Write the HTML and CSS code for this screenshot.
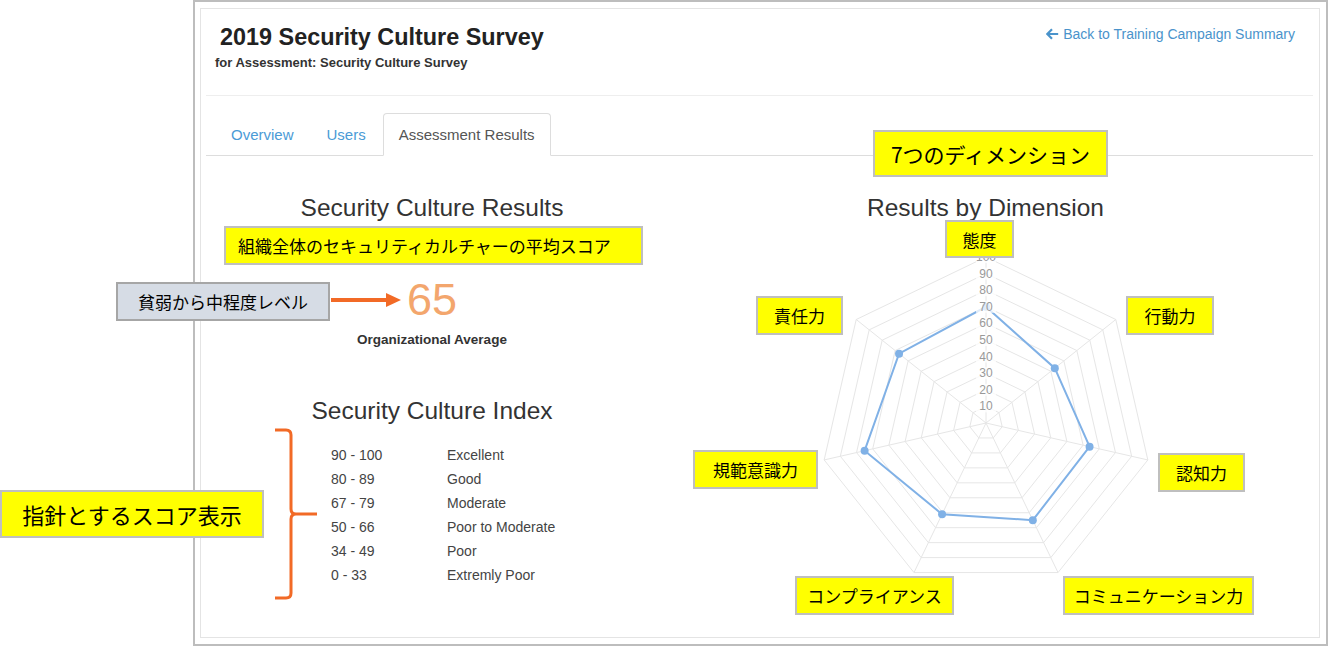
FILE: index.html
```html
<!DOCTYPE html>
<html lang="ja">
<head>
    <meta charset="UTF-8">
    <meta name="viewport" content="width=device-width, initial-scale=1.0">
    <title>2019 Security Culture Survey - Assessment Results</title>
    <link rel="stylesheet" href="styles.css">
</head>
<body>
    <div class="frame">
        <div class="panel">
            <header class="page-header">
                <div class="titles">
                    <h1>2019 Security Culture Survey</h1>
                    <p class="subtitle">for Assessment: Security Culture Survey</p>
                </div>
                <a class="back-link" href="#">
                    <svg width="13" height="12" viewBox="0 0 13 12"><path d="M6 1.2 L1.3 6 L6 10.8 M1.6 6 H12.2" fill="none" stroke="currentColor" stroke-width="2.2"/></svg>
                    Back to Training Campaign Summary
                </a>
            </header>

            <ul class="tabs">
                <li><a href="#">Overview</a></li>
                <li><a href="#">Users</a></li>
                <li class="active"><a href="#">Assessment Results</a></li>
            </ul>

            <div class="results">
                <section class="col-left">
                    <h2>Security Culture Results</h2>
                    <div class="score">65</div>
                    <div class="score-label">Organizational Average</div>

                    <h2 class="index-title">Security Culture Index</h2>
                    <table class="index-table">
                        <tr><td>90 - 100</td><td>Excellent</td></tr>
                        <tr><td>80 - 89</td><td>Good</td></tr>
                        <tr><td>67 - 79</td><td>Moderate</td></tr>
                        <tr><td>50 - 66</td><td>Poor to Moderate</td></tr>
                        <tr><td>34 - 49</td><td>Poor</td></tr>
                        <tr><td>0 - 33</td><td>Extremly Poor</td></tr>
                    </table>
                </section>

                <section class="col-right">
                    <h2>Results by Dimension</h2>
                    <svg id="radar" class="radar" width="400" height="360" viewBox="0 0 400 360"></svg>
                </section>
            </div>
        </div>
    </div>

    <!-- 注釈 -->
    <div class="note note-average">組織全体のセキュリティカルチャーの平均スコア</div>
    <div class="note note-level">貧弱から中程度レベル</div>
    <div class="note note-index">指針とするスコア表示</div>
    <div class="note note-dimensions">7つのディメンション</div>
    <div class="note note-attitude">態度</div>
    <div class="note note-behavior">行動力</div>
    <div class="note note-responsibility">責任力</div>
    <div class="note note-norms">規範意識力</div>
    <div class="note note-cognition">認知力</div>
    <div class="note note-compliance">コンプライアンス</div>
    <div class="note note-communication">コミュニケーション力</div>

    <svg class="arrow" width="74" height="18" viewBox="0 0 74 18">
        <path d="M2 9 H59" stroke="#f26a26" stroke-width="4"/>
        <polygon points="57,2 72,9 57,16" fill="#f26a26"/>
    </svg>

    <svg class="brace" width="50" height="176" viewBox="0 0 50 176">
        <path d="M3 3 H14 Q19 3 19 8 V82 Q19 87 24 87 H45 M24 87 Q19 87 19 92 V166 Q19 171 14 171 H3" fill="none" stroke="#f26a26" stroke-width="3"/>
    </svg>

    <script>
        const svg = document.getElementById('radar');
        const NS = 'http://www.w3.org/2000/svg';
        const cx = 200, cy = 180, R = 166;
        // 態度, 行動力, 認知力, コミュニケーション力, コンプライアンス, 規範意識力, 責任力
        const scores = [70, 53, 64, 65, 61, 75, 67];
        const n = scores.length;

        function point(i, r) {
            const a = -Math.PI / 2 + i * 2 * Math.PI / n;
            return [cx + r * Math.cos(a), cy + r * Math.sin(a)];
        }

        function add(tag, attrs) {
            const el = document.createElementNS(NS, tag);
            for (const k in attrs) el.setAttribute(k, attrs[k]);
            svg.appendChild(el);
            return el;
        }

        // 目盛りのリング
        for (let k = 1; k <= 10; k++) {
            const pts = [];
            for (let i = 0; i < n; i++) pts.push(point(i, R * k / 10).join(','));
            add('polygon', { points: pts.join(' '), class: 'grid' });
        }
        // 軸
        for (let i = 0; i < n; i++) {
            const [x, y] = point(i, R);
            add('line', { x1: cx, y1: cy, x2: x, y2: y, class: 'grid' });
        }
        // データ
        const dataPts = scores.map((s, i) => point(i, R * s / 100));
        add('polygon', { points: dataPts.map(p => p.join(',')).join(' '), class: 'data-line' });
        dataPts.forEach(([x, y]) => add('circle', { cx: x, cy: y, r: 4, class: 'data-point' }));
        // 目盛りラベル
        for (let k = 1; k <= 10; k++) {
            const y = cy - R * k / 10;
            add('rect', { x: cx - 10, y: y - 6, width: 20, height: 12, class: 'tick-bg' });
            const t = add('text', { x: cx, y: y + 4, class: 'tick' });
            t.textContent = k * 10;
        }
    </script>
</body>
</html>
```

FILE: styles.css
```css
body {
    margin: 0;
    position: relative;
    background: white;
    font-family: 'Liberation Sans', Arial, 'Noto Sans CJK JP', sans-serif;
    color: #333;
}
.frame {
    margin-left: 193px;
    width: 1135px;
    height: 646px;
    border: 2px solid #bdbdbd;
    box-sizing: border-box;
    padding: 6px 6px 0 5px;
}
.panel {
    height: 630px;
    border: 1px solid #e4e4e4;
    box-sizing: border-box;
    padding: 0 6px 0 5px;
}
.page-header {
    display: flex;
    justify-content: space-between;
    align-items: flex-start;
    padding: 14px 18px 24px 9px;
    border-bottom: 1px solid #eeeeee;
}
h1 {
    margin: 0 0 0 5px;
    font-size: 23.4px;
    line-height: 28px;
    font-weight: bold;
    color: #222;
}
.subtitle {
    margin: 4px 0 0;
    font-size: 13px;
    line-height: 16px;
    font-weight: bold;
    color: #333;
}
.back-link {
    margin-top: 2px;
    display: flex;
    align-items: center;
    gap: 4px;
    font-size: 14px;
    line-height: 18px;
    color: #4a93cb;
    text-decoration: none;
}
.tabs {
    display: flex;
    list-style: none;
    margin: 17px 0 0;
    padding: 0 0 0 9px;
    border-bottom: 1px solid #dddddd;
}
.tabs li {
    margin-right: 1px;
    margin-bottom: -1px;
}
.tabs a {
    display: block;
    height: 43px;
    box-sizing: border-box;
    padding: 0 15px;
    line-height: 41px;
    font-size: 15px;
    color: #4b9bd6;
    text-decoration: none;
    border: 1px solid transparent;
    border-radius: 4px 4px 0 0;
}
.tabs .active a {
    color: #555;
    background: white;
    border-color: #dddddd;
    border-bottom-color: white;
}
.results {
    display: grid;
    grid-template-columns: 452px 1fr;
}
h2 {
    margin: 37px 0 0;
    font-size: 24.5px;
    line-height: 30px;
    font-weight: normal;
    color: #333;
    text-align: center;
}
.score {
    margin-top: 54px;
    font-size: 45px;
    line-height: 46px;
    color: #f3a66d;
    text-align: center;
}
.score-label {
    margin-top: 8px;
    font-size: 13.5px;
    line-height: 18px;
    font-weight: bold;
    color: #333;
    text-align: center;
}
.index-title {
    margin-top: 47px;
}
.index-table {
    margin: 17px 0 0 125px;
    border-collapse: collapse;
    font-size: 14px;
    color: #444;
}
.index-table td {
    padding: 0;
    height: 24px;
    line-height: 24px;
}
.index-table td:first-child {
    width: 116px;
}
.col-right {
    display: flex;
    flex-direction: column;
    align-items: center;
}
.radar {
    margin-top: 20px;
}
.grid {
    fill: none;
    stroke: #e6e6e6;
    stroke-width: 1;
}
.data-line {
    fill: none;
    stroke: #80b1e6;
    stroke-width: 2;
}
.data-point {
    fill: #80b1e6;
}
.tick-bg {
    fill: rgba(255,255,255,0.75);
}
.tick {
    font-family: 'Liberation Sans', Arial, sans-serif;
    font-size: 12px;
    fill: #999;
    text-anchor: middle;
}

/* 注釈ボックス */
.note {
    position: absolute;
    display: flex;
    align-items: center;
    justify-content: center;
    box-sizing: border-box;
    background: #ffff00;
    border: 2px solid #bfbfbf;
    font-family: 'Noto Sans CJK JP', sans-serif;
    font-size: 17px;
    color: #000;
    white-space: nowrap;
}
.note-average { left: 224px; top: 226px; width: 419px; height: 39px; justify-content: flex-start; padding-left: 12px; }
.note-level { left: 116px; top: 282px; width: 214px; height: 39px; background: #d6dce5; border-color: #a6a6a6; }
.note-index { left: 0; top: 490px; width: 264px; height: 48px; font-size: 22px; }
.note-dimensions { left: 873px; top: 130px; width: 235px; height: 47px; font-size: 21px; }
.note-attitude { left: 945px; top: 220px; width: 69px; height: 38px; }
.note-behavior { left: 1126px; top: 296px; width: 88px; height: 39px; }
.note-responsibility { left: 756px; top: 296px; width: 87px; height: 39px; }
.note-norms { left: 693px; top: 450px; width: 125px; height: 39px; }
.note-cognition { left: 1158px; top: 453px; width: 87px; height: 39px; }
.note-compliance { left: 795px; top: 576px; width: 159px; height: 39px; }
.note-communication { left: 1063px; top: 576px; width: 191px; height: 39px; }

.arrow {
    position: absolute;
    left: 329px;
    top: 291px;
}
.brace {
    position: absolute;
    left: 272px;
    top: 427px;
}
```
